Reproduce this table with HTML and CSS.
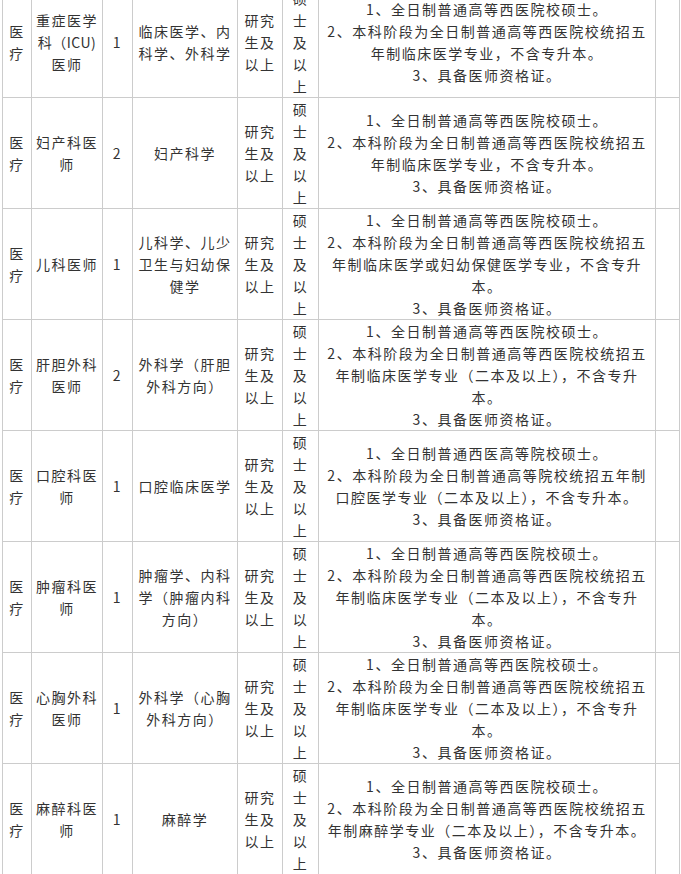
FILE: index.html
```html
<!DOCTYPE html>
<html lang="zh-CN">
<head>
<meta charset="utf-8">
<title>招聘岗位</title>
<link rel="stylesheet" href="styles.css">
</head>
<body>
<table class="jobs">
<colgroup>
<col class="c1"><col class="c2"><col class="c3"><col class="c4"><col class="c5"><col class="c6"><col class="c7"><col class="c8">
</colgroup>
<tbody>
<tr>
<td>医疗</td><td>重症医学<span class="nw">科（ICU)</span>医师</td><td>1</td><td>临床医学、内科学、外科学</td><td>研究生及以上</td><td>硕士及以上</td>
<td>1、全日制普通高等西医院校硕士。<br>2、本科阶段为全日制普通高等西医院校统招五年制临床医学专业，不含专升本。<br>3、具备医师资格证。</td><td></td>
</tr>
<tr>
<td>医疗</td><td>妇产科医师</td><td>2</td><td>妇产科学</td><td>研究生及以上</td><td>硕士及以上</td>
<td>1、全日制普通高等西医院校硕士。<br>2、本科阶段为全日制普通高等西医院校统招五年制临床医学专业，不含专升本。<br>3、具备医师资格证。</td><td></td>
</tr>
<tr>
<td>医疗</td><td>儿科医师</td><td>1</td><td>儿科学、儿少卫生与妇幼保健学</td><td>研究生及以上</td><td>硕士及以上</td>
<td>1、全日制普通高等西医院校硕士。<br>2、本科阶段为全日制普通高等西医院校统招五年制临床医学或妇幼保健医学专业，不含专升本。<br>3、具备医师资格证。</td><td></td>
</tr>
<tr>
<td>医疗</td><td>肝胆外科医师</td><td>2</td><td>外科学（肝胆外科方向）</td><td>研究生及以上</td><td>硕士及以上</td>
<td>1、全日制普通高等西医院校硕士。<br>2、本科阶段为全日制普通高等西医院校统招五年制临床医学专业（二本及以上），不含专升本。<br>3、具备医师资格证。</td><td></td>
</tr>
<tr>
<td>医疗</td><td>口腔科医师</td><td>1</td><td>口腔临床医学</td><td>研究生及以上</td><td>硕士及以上</td>
<td>1、全日制普通西医高等院校硕士。<br>2、本科阶段为全日制普通高等院校统招五年制口腔医学专业（二本及以上），不含专升本。<br>3、具备医师资格证。</td><td></td>
</tr>
<tr>
<td>医疗</td><td>肿瘤科医师</td><td>1</td><td>肿瘤学、内科学（肿瘤内科方向）</td><td>研究生及以上</td><td>硕士及以上</td>
<td>1、全日制普通高等西医院校硕士。<br>2、本科阶段为全日制普通高等西医院校统招五年制临床医学专业（二本及以上），不含专升本。<br>3、具备医师资格证。</td><td></td>
</tr>
<tr>
<td>医疗</td><td>心胸外科医师</td><td>1</td><td>外科学（心胸外科方向）</td><td>研究生及以上</td><td>硕士及以上</td>
<td>1、全日制普通高等西医院校硕士。<br>2、本科阶段为全日制普通高等西医院校统招五年制临床医学专业（二本及以上），不含专升本。<br>3、具备医师资格证。</td><td></td>
</tr>
<tr>
<td>医疗</td><td>麻醉科医师</td><td>1</td><td>麻醉学</td><td>研究生及以上</td><td>硕士及以上</td>
<td>1、全日制普通高等西医院校硕士。<br>2、本科阶段为全日制普通高等西医院校统招五年制麻醉学专业（二本及以上），不含专升本。<br>3、具备医师资格证。</td><td></td>
</tr>
</tbody>
</table>
</body>
</html>
```
FILE: styles.css
```css
html, body {
  margin: 0;
  padding: 0;
  background: #ffffff;
}
body {
  font-family: "Noto Sans CJK SC", "Noto Sans", sans-serif;
  font-size: 14px;
  line-height: 22px;
  color: #333333;
  letter-spacing: 1.5px;
}
.jobs {
  border-collapse: collapse;
  table-layout: fixed;
  width: 678px;
  margin: -14px 0 0 2px;
}
.jobs td {
  border: 1px solid #cccccc;
  padding: 0 3px;
  text-align: center;
  vertical-align: middle;
}
.nw {
  white-space: nowrap;
  letter-spacing: 0.5px;
}
.c1 { width: 29px; }
.c2 { width: 71px; }
.c3 { width: 30px; }
.c4 { width: 105px; }
.c5 { width: 45px; }
.c6 { width: 36px; }
.c7 { width: 337px; }
.c8 { width: 24px; }
```
